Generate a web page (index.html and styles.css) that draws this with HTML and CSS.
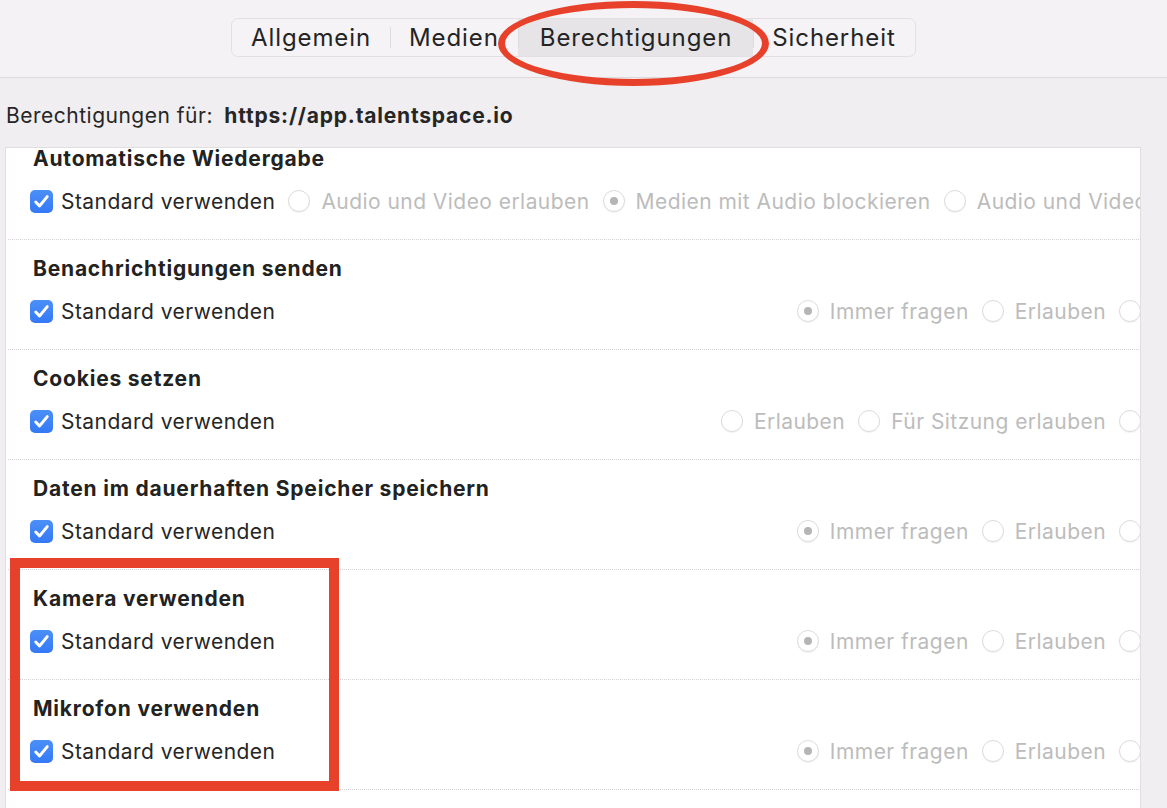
FILE: index.html
```html
<!DOCTYPE html>
<html>
<head>
  <title>Seiteninformationen</title>
  <link rel="stylesheet" href="styles.css">
</head>
<body>
  <header class="toolbar">
    <nav class="tabs">
      <span class="tab">Allgemein</span>
      <span class="tab">Medien</span>
      <span class="tab active">Berechtigungen</span>
      <span class="tab">Sicherheit</span>
    </nav>
    <div class="mark-ellipse"></div>
  </header>

  <main class="content">
    <p class="site">Berechtigungen für: <strong>https://app.talentspace.io</strong></p>

    <div class="panel">
      <div class="perm-list">
        <section class="perm">
          <h3 class="perm-title">Automatische Wiedergabe</h3>
          <div class="perm-controls wide">
            <label class="default"><span class="checkbox"><svg viewBox="0 0 22 22"><path d="M5.5 11.5l3.6 3.8 7.4-9"/></svg></span>Standard verwenden</label>
            <div class="options">
              <span class="option"><span class="radio"></span>Audio und Video erlauben</span>
              <span class="option"><span class="radio checked"></span>Medien mit Audio blockieren</span>
              <span class="option"><span class="radio"></span>Audio und Video blockieren</span>
            </div>
          </div>
        </section>

        <section class="perm">
          <h3 class="perm-title">Benachrichtigungen senden</h3>
          <div class="perm-controls">
            <label class="default"><span class="checkbox"><svg viewBox="0 0 22 22"><path d="M5.5 11.5l3.6 3.8 7.4-9"/></svg></span>Standard verwenden</label>
            <div class="options">
              <span class="option"><span class="radio checked"></span>Immer fragen</span>
              <span class="option"><span class="radio"></span>Erlauben</span>
              <span class="option"><span class="radio"></span>Blockieren</span>
            </div>
          </div>
        </section>

        <section class="perm">
          <h3 class="perm-title">Cookies setzen</h3>
          <div class="perm-controls">
            <label class="default"><span class="checkbox"><svg viewBox="0 0 22 22"><path d="M5.5 11.5l3.6 3.8 7.4-9"/></svg></span>Standard verwenden</label>
            <div class="options">
              <span class="option"><span class="radio"></span>Erlauben</span>
              <span class="option"><span class="radio"></span>Für Sitzung erlauben</span>
              <span class="option"><span class="radio"></span>Blockieren</span>
            </div>
          </div>
        </section>

        <section class="perm">
          <h3 class="perm-title">Daten im dauerhaften Speicher speichern</h3>
          <div class="perm-controls">
            <label class="default"><span class="checkbox"><svg viewBox="0 0 22 22"><path d="M5.5 11.5l3.6 3.8 7.4-9"/></svg></span>Standard verwenden</label>
            <div class="options">
              <span class="option"><span class="radio checked"></span>Immer fragen</span>
              <span class="option"><span class="radio"></span>Erlauben</span>
              <span class="option"><span class="radio"></span>Blockieren</span>
            </div>
          </div>
        </section>

        <section class="perm">
          <h3 class="perm-title">Kamera verwenden</h3>
          <div class="perm-controls">
            <label class="default"><span class="checkbox"><svg viewBox="0 0 22 22"><path d="M5.5 11.5l3.6 3.8 7.4-9"/></svg></span>Standard verwenden</label>
            <div class="options">
              <span class="option"><span class="radio checked"></span>Immer fragen</span>
              <span class="option"><span class="radio"></span>Erlauben</span>
              <span class="option"><span class="radio"></span>Blockieren</span>
            </div>
          </div>
        </section>

        <section class="perm">
          <h3 class="perm-title">Mikrofon verwenden</h3>
          <div class="perm-controls">
            <label class="default"><span class="checkbox"><svg viewBox="0 0 22 22"><path d="M5.5 11.5l3.6 3.8 7.4-9"/></svg></span>Standard verwenden</label>
            <div class="options">
              <span class="option"><span class="radio checked"></span>Immer fragen</span>
              <span class="option"><span class="radio"></span>Erlauben</span>
              <span class="option"><span class="radio"></span>Blockieren</span>
            </div>
          </div>
        </section>

        <section class="perm">
          <h3 class="perm-title">Ort abfragen</h3>
          <div class="perm-controls">
            <label class="default"><span class="checkbox"><svg viewBox="0 0 22 22"><path d="M5.5 11.5l3.6 3.8 7.4-9"/></svg></span>Standard verwenden</label>
          </div>
        </section>
      </div>
    </div>

    <div class="mark-rect"></div>
  </main>
</body>
</html>
```

FILE: styles.css
```css
html,
body {
  margin: 0;
  padding: 0;
  height: 100%;
  overflow: hidden;
}

body {
  font-family: Inter, "Noto Sans", sans-serif;
  color: #262626;
  background-color: #f0eef0;
}

.toolbar {
  position: relative;
  height: 77px;
  border-bottom: 1px solid #dcdadc;
  background-color: #f4f2f4;
  display: flex;
  align-items: flex-start;
  padding-left: 231px;
}

.tabs {
  display: flex;
  margin-top: 18px;
  height: 39px;
  box-sizing: border-box;
  border: 1px solid #e2e0e2;
  border-radius: 7px;
  background-color: #f5f3f5;
  overflow: hidden;
}

.tab {
  display: flex;
  align-items: center;
  padding: 0 19px;
  font-size: 24px;
  letter-spacing: 0.9px;
  color: #242424;
  position: relative;
}

.tab + .tab::before {
  content: "";
  position: absolute;
  left: 0;
  top: 8px;
  bottom: 8px;
  width: 1px;
  background-color: #dedcde;
}

.tab.active {
  padding: 0 21px 0 22px;
  background-color: #e6e4e6;
}

.mark-ellipse {
  position: absolute;
  left: 498px;
  top: 1px;
  width: 271px;
  height: 85px;
  box-sizing: border-box;
  border: 7px solid #e8412b;
  border-radius: 50%;
}

.content {
  position: relative;
  padding-top: 26px;
}

.site {
  margin: 0 0 19px 6px;
  font-size: 21px;
  line-height: 24px;
  letter-spacing: 0.5px;
}

.site strong {
  margin-left: 5px;
  letter-spacing: 0.8px;
}

.panel {
  margin-left: 5px;
  width: 1136px;
  height: 700px;
  box-sizing: border-box;
  border: 1px solid #e0dfe0;
  background-color: #fff;
  overflow: hidden;
}

.perm-list {
  width: 1295px;
  margin-top: -18px;
}

.perm {
  margin: 0 0 0 2px;
  padding: 17px 0 26px;
  border-bottom: 1px dotted #d2d2d2;
}

.perm-title {
  margin: 0 0 18px 25px;
  font-size: 21px;
  line-height: 24px;
  font-weight: 700;
  letter-spacing: 0.8px;
  color: #222;
}

.perm-controls {
  display: flex;
  justify-content: space-between;
  align-items: center;
  gap: 13px;
  height: 24px;
  padding: 0 40px 0 22px;
  font-size: 21px;
  letter-spacing: 0.45px;
  white-space: nowrap;
}

.perm-controls.wide {
  justify-content: flex-start;
}

.default {
  display: flex;
  align-items: center;
  gap: 8px;
  flex-shrink: 0;
  color: #262626;
}

.checkbox {
  width: 23px;
  height: 23px;
  border-radius: 5px;
  background: linear-gradient(#4b90f8, #3478f6);
  display: flex;
}

.checkbox svg {
  width: 23px;
  height: 23px;
  fill: none;
  stroke: #fff;
  stroke-width: 2.8;
  stroke-linecap: round;
  stroke-linejoin: round;
}

.options {
  display: flex;
  gap: 13px;
  flex-shrink: 0;
}

.option {
  display: flex;
  align-items: center;
  gap: 11px;
  color: #bcbcbc;
}

.radio {
  width: 22px;
  height: 22px;
  box-sizing: border-box;
  border: 1px solid #dcdcdc;
  border-radius: 50%;
  background-color: #fff;
  box-shadow: 0 1px 1px rgba(0, 0, 0, 0.05);
  display: flex;
  align-items: center;
  justify-content: center;
}

.radio.checked::after {
  content: "";
  width: 8px;
  height: 8px;
  border-radius: 50%;
  background-color: #b5b5b5;
}

.mark-rect {
  position: absolute;
  left: 10px;
  top: 480px;
  width: 329px;
  height: 233px;
  box-sizing: border-box;
  border: 10px solid #e8412b;
}
```
